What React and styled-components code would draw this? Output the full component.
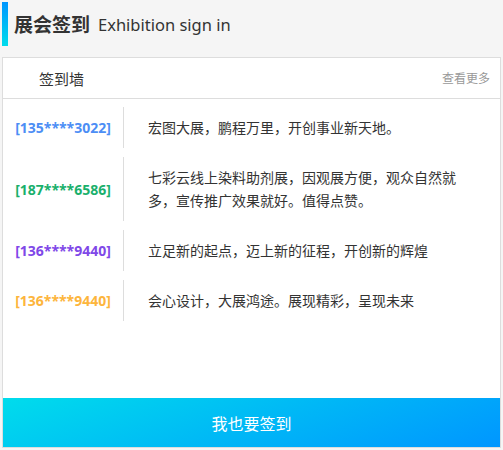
import React from 'react';
import styled, { createGlobalStyle } from 'styled-components';

const GlobalStyle = createGlobalStyle`
  html, body {
    margin: 0;
    padding: 0;
    background: #f5f5f5;
    font-family: "Noto Sans", "Noto Sans CJK SC", sans-serif;
    color: #333;
  }
`;

const Page = styled.div`
  height: 450px;
  padding: 2px;
  box-sizing: border-box;
  display: flex;
  flex-direction: column;
`;

const Header = styled.div`
  height: 44px;
  display: flex;
  align-items: center;
  margin-bottom: 11px;
`;

const Bar = styled.div`
  width: 6px;
  height: 44px;
  background: linear-gradient(180deg, #0096ff, #00dcec);
  margin-right: 6px;
`;

const Title = styled.h1`
  margin: 0;
  font-size: 19px;
  font-weight: bold;
  color: #333;
`;

const SubTitle = styled.span`
  font-size: 16.5px;
  margin-left: 8px;
  color: #333;
`;

const Card = styled.div`
  flex: 1;
  display: flex;
  flex-direction: column;
  background: #fff;
  border: 1px solid #ddd;
`;

const CardHead = styled.div`
  height: 40px;
  display: flex;
  align-items: center;
  justify-content: space-between;
  padding: 0 10px 0 36px;
  border-bottom: 1px solid #ddd;
`;

const CardTitle = styled.span`
  font-size: 15px;
  color: #333;
`;

const More = styled.span`
  font-size: 12px;
  color: #999;
`;

const List = styled.div`
  flex: 1;
  display: flex;
  flex-direction: column;
  gap: 9px;
  padding-top: 8px;
`;

const Row = styled.div`
  display: flex;
  align-items: stretch;
`;

const Name = styled.div`
  width: 120px;
  flex-shrink: 0;
  display: flex;
  align-items: center;
  justify-content: center;
  border-right: 1px solid #ddd;
  font-size: 14px;
  font-weight: bold;
  color: ${(props) => props.color};
`;

const Message = styled.div`
  flex: 1;
  padding: 9px 40px 9px 24px;
  font-size: 14px;
  line-height: 23px;
  color: #333;
`;

const SignButton = styled.button`
  height: 49px;
  border: none;
  background: linear-gradient(160deg, #00dcec, #0096ff);
  color: #fff;
  font-size: 16px;
  font-family: "Noto Sans CJK SC", sans-serif;
  cursor: pointer;
`;

const records = [
  { phone: '[135****3022]', color: '#4c8ef5', text: '宏图大展，鹏程万里，开创事业新天地。' },
  { phone: '[187****6586]', color: '#1ab06c', text: '七彩云线上染料助剂展，因观展方便，观众自然就多，宣传推广效果就好。值得点赞。' },
  { phone: '[136****9440]', color: '#8048e8', text: '立足新的起点，迈上新的征程，开创新的辉煌' },
  { phone: '[136****9440]', color: '#fdb53c', text: '会心设计，大展鸿途。展现精彩，呈现未来' },
];

const App = () => {
  return (
    <Page>
      <GlobalStyle />
      <Header>
        <Bar />
        <Title>展会签到</Title>
        <SubTitle>Exhibition sign in</SubTitle>
      </Header>
      <Card>
        <CardHead>
          <CardTitle>签到墙</CardTitle>
          <More>查看更多</More>
        </CardHead>
        <List>
          {records.map((r, i) => (
            <Row key={i}>
              <Name color={r.color}>{r.phone}</Name>
              <Message>{r.text}</Message>
            </Row>
          ))}
        </List>
        <SignButton>我也要签到</SignButton>
      </Card>
    </Page>
  );
};

export default App;
